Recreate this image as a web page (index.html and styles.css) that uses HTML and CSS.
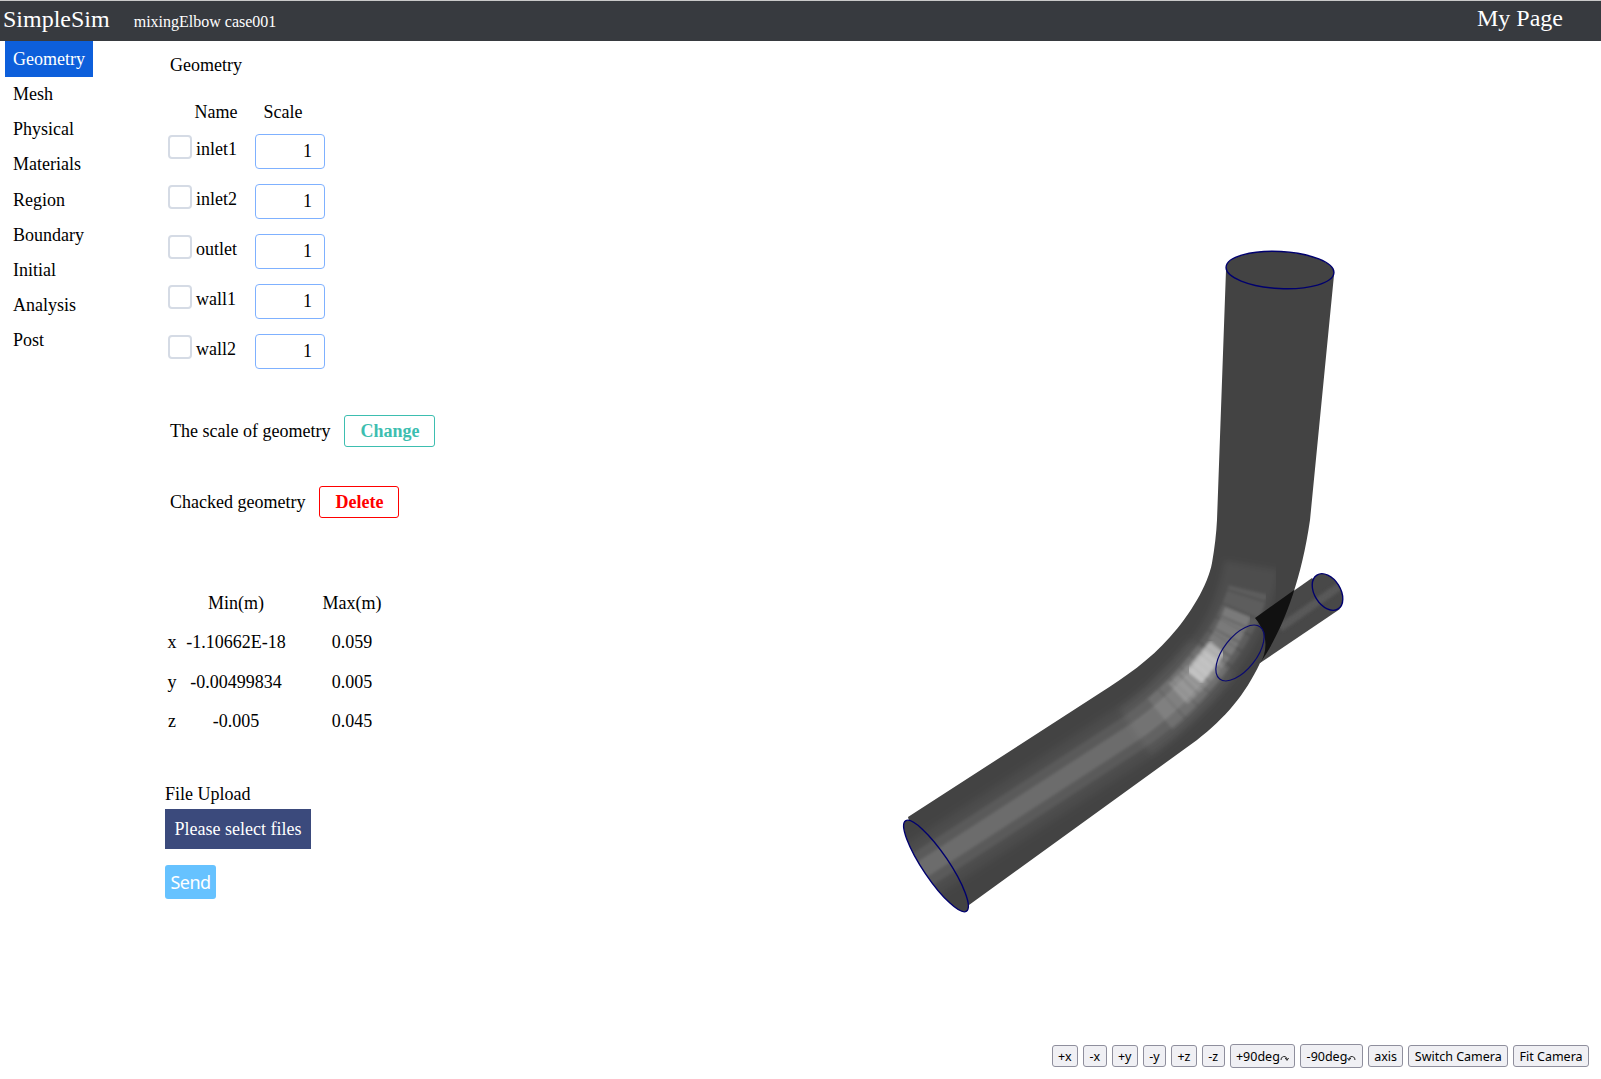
FILE: index.html
```html
<!DOCTYPE html>
<html lang="en">
<head>
<meta charset="utf-8">
<title>SimpleSim</title>
<link rel="stylesheet" href="styles.css">
</head>
<body>
<header class="topbar">
  <span class="brand">SimpleSim</span>
  <span class="case-name">mixingElbow case001</span>
  <span class="my-page">My Page</span>
</header>
<div class="workspace">
  <nav class="sidebar">
    <a class="nav-item active">Geometry</a>
    <a class="nav-item">Mesh</a>
    <a class="nav-item">Physical</a>
    <a class="nav-item">Materials</a>
    <a class="nav-item">Region</a>
    <a class="nav-item">Boundary</a>
    <a class="nav-item">Initial</a>
    <a class="nav-item">Analysis</a>
    <a class="nav-item">Post</a>
  </nav>
  <main class="panel">
    <div class="panel-title">Geometry</div>
    <div class="geo-head"><span class="head-name">Name</span><span class="head-scale">Scale</span></div>
    <div class="geo-list">
      <div class="geo-row"><input class="check" type="checkbox"><span class="geo-name">inlet1</span><input class="scale" type="text" value="1"></div>
      <div class="geo-row"><input class="check" type="checkbox"><span class="geo-name">inlet2</span><input class="scale" type="text" value="1"></div>
      <div class="geo-row"><input class="check" type="checkbox"><span class="geo-name">outlet</span><input class="scale" type="text" value="1"></div>
      <div class="geo-row"><input class="check" type="checkbox"><span class="geo-name">wall1</span><input class="scale" type="text" value="1"></div>
      <div class="geo-row"><input class="check" type="checkbox"><span class="geo-name">wall2</span><input class="scale" type="text" value="1"></div>
    </div>
    <div class="action-row change-row"><span>The scale of geometry</span><button class="btn btn-change">Change</button></div>
    <div class="action-row delete-row"><span>Chacked geometry</span><button class="btn btn-delete">Delete</button></div>
    <div class="bounds">
      <span></span><span>Min(m)</span><span>Max(m)</span>
      <span>x</span><span>-1.10662E-18</span><span>0.059</span>
      <span>y</span><span>-0.00499834</span><span>0.005</span>
      <span>z</span><span>-0.005</span><span>0.045</span>
    </div>
    <div class="upload-label">File Upload</div>
    <button class="select-files">Please select files</button>
    <button class="send">Send</button>
  </main>
  <section class="viewer">
    <svg class="scene" viewBox="600 41 1001 998" preserveAspectRatio="xMinYMin meet" aria-label="mixing elbow geometry">
      <defs>
        <path id="main-shape" d="M1226 270 L1217 520 Q1216 540 1212 563 C1208 585 1190 615 1170 637 C1150 660 1125 677 1100 693 L908 817 C915 850 945 895 969 905 L1197 740 C1225 718 1245 695 1260 663 C1278 638 1300 590 1310 520 L1334 275 Z"/>
        <clipPath id="main-clip">
          <use href="#main-shape"/>
          <ellipse cx="936" cy="866" rx="54.5" ry="13" transform="rotate(56 936 866)"/>
        </clipPath>
        <clipPath id="small-clip">
          <path d="M1312 578 L1255 618 L1260 663 L1340 609 Z"/>
          <ellipse cx="1327.5" cy="592" rx="20" ry="13" transform="rotate(58 1327.5 592)"/>
        </clipPath>
        <filter id="blur-lg" x="-20%" y="-20%" width="140%" height="140%"><feGaussianBlur stdDeviation="4"/></filter>
        <filter id="blur-md" x="-20%" y="-20%" width="140%" height="140%"><feGaussianBlur stdDeviation="3"/></filter>
        <filter id="blur-sm" x="-20%" y="-20%" width="140%" height="140%"><feGaussianBlur stdDeviation="1.5"/></filter>
      </defs>

      <path class="small-pipe" d="M1312 578 L1255 618 L1260 663 L1340 609 Z"/>
      <ellipse class="small-cap" cx="1327.5" cy="592" rx="20" ry="13" transform="rotate(58 1327.5 592)"/>
      <g clip-path="url(#small-clip)">
        <path class="small-band" filter="url(#blur-sm)" d="M1280 628 L1340 586"/>
      </g>

      <use href="#main-shape" class="main-fill"/>
      <ellipse class="main-cap" cx="1280" cy="270" rx="54" ry="18.5" transform="rotate(3 1280 270)"/>
      <ellipse class="main-cap" cx="936" cy="866" rx="54.5" ry="13" transform="rotate(56 936 866)"/>
      <g clip-path="url(#main-clip)">
        <path class="band band-wide" filter="url(#blur-lg)" d="M900 884 L1133 733 C1170 708 1195 680 1213 657"/>
        <path class="band band-mid" filter="url(#blur-sm)" d="M900 884 L1133 733 C1170 708 1195 680 1213 657"/>
        <path class="band band-core" filter="url(#blur-sm)" d="M900 884 L1133 733 C1170 708 1195 680 1213 657"/>
        <path class="bend bend-outer" filter="url(#blur-md)" d="M1135 732 C1170 708 1195 680 1213 657 C1230 635 1245 605 1252 565"/>
        <path class="bend bend-inner" filter="url(#blur-sm)" d="M1160 714 C1180 698 1197 678 1213 657 C1230 635 1243 610 1248 590"/>
        <path class="bend bend-hot" filter="url(#blur-sm)" d="M1178 694 C1190 683 1203 670 1213 657 C1222 646 1230 632 1238 612"/>
        <path class="bend bend-peak" filter="url(#blur-sm)" d="M1194 677 L1218 647"/>
        <path class="wedge" d="M1297 588 L1255 618 C1268 634 1268 650 1260 664 L1320 610 Z"/>
      </g>

      <ellipse class="rim" cx="1280" cy="270" rx="54" ry="18.5" transform="rotate(3 1280 270)"/>
      <ellipse class="rim rim-thin" cx="1240" cy="653" rx="33" ry="16.5" transform="rotate(-52 1240 653)"/>
      <ellipse class="rim" cx="1327.5" cy="592" rx="20" ry="13" transform="rotate(58 1327.5 592)"/>
      <ellipse class="rim" cx="936" cy="866" rx="54.5" ry="13" transform="rotate(56 936 866)"/>
    </svg>
    <div class="toolbar">
      <button class="tool">+x</button>
      <button class="tool">-x</button>
      <button class="tool">+y</button>
      <button class="tool">-y</button>
      <button class="tool">+z</button>
      <button class="tool">-z</button>
      <button class="tool tool-tall">+90deg<svg class="turn" viewBox="0 0 9 9"><path d="M1 7 C1 2.5 6.5 2.5 7 6"/><path d="M5.2 5 L7 7.4 L8.6 5"/></svg></button>
      <button class="tool tool-tall">-90deg<svg class="turn" viewBox="0 0 9 9"><path d="M8 7 C8 2.5 2.5 2.5 2 6"/><path d="M0.4 5 L2 7.4 L3.8 5"/></svg></button>
      <button class="tool">axis</button>
      <button class="tool">Switch Camera</button>
      <button class="tool">Fit Camera</button>
    </div>
  </section>
</div>
</body>
</html>
```
FILE: styles.css
```css
* { box-sizing: border-box; }
html, body { margin: 0; height: 100%; }
body {
  width: 1601px;
  height: 1079px;
  overflow: hidden;
  background: #fff;
  color: #000;
  font-family: "Liberation Serif", "Times New Roman", serif;
  font-size: 18px;
}
.topbar {
  height: 41px;
  border-top: 1px solid #c9c9c9;
  background: #373a3f;
  color: #fff;
  display: flex;
  align-items: center;
  padding: 0 38px 0 3px;
}
.brand { font-size: 24px; margin-bottom: 4px; }
.case-name { font-size: 16px; margin-left: 24px; margin-top: 2px; }
.my-page { font-size: 24px; margin-left: auto; margin-bottom: 6px; }

.workspace { display: flex; height: 1038px; }
.sidebar { width: 165px; padding-left: 5px; flex: none; display: flex; flex-direction: column; }
.nav-item {
  width: 88px;
  height: 35.15px;
  padding-left: 8px;
  line-height: 36.5px;
}
.nav-item.active { background: #0d5fdb; color: #fff; height: 36px; margin-bottom: -0.85px; }

.panel { width: 435px; flex: none; display: flex; flex-direction: column; align-items: flex-start; }
.panel-title { margin: 14px 0 0 5px; line-height: 20px; }
.geo-head { margin-top: 27px; height: 20px; line-height: 20px; width: 200px; display: flex; }
.head-name { width: 60px; margin-left: 21px; text-align: center; }
.head-scale { width: 60px; margin-left: 7px; text-align: center; }
.geo-list { margin-top: 12px; display: flex; flex-direction: column; gap: 15px; }
.geo-row { display: flex; height: 35px; align-items: flex-start; padding-left: 3px; }
.check {
  appearance: none;
  width: 24px;
  height: 24px;
  margin: 1px 0 0;
  border: 2px solid #d5dbe5;
  border-radius: 4px;
  background: #fff;
}
.geo-name { width: 59px; margin-left: 4px; line-height: 20px; padding-top: 5px; }
.scale {
  width: 70px;
  height: 35px;
  border: 1px solid #7fb1ff;
  border-radius: 4px;
  padding: 0 12px 0 0;
  text-align: right;
  font: 18px "Liberation Serif", "Times New Roman", serif;
  color: #000;
  background: #fff;
}

.action-row { display: flex; align-items: center; padding-left: 5px; height: 32px; }
.action-row span { padding-top: 1px; }
.change-row { margin-top: 46px; }
.delete-row { margin-top: 39px; }
.btn {
  height: 32px;
  background: #fff;
  border-radius: 3px;
  border: 1px solid;
  font: bold 18px "Liberation Serif", "Times New Roman", serif;
  padding: 1px 0 0;
  margin-left: 14px;
}
.btn-change { width: 91px; color: #3dbeb0; border-color: #3dbeb0; }
.btn-delete { width: 80px; color: #ff0000; border-color: #ff0000; }

.bounds {
  margin-top: 66px;
  display: grid;
  grid-template-columns: 14px 114px 118px;
  grid-auto-rows: 39.3px;
  align-items: center;
  text-align: center;
}
.upload-label { margin-top: 43px; line-height: 20px; }
.select-files {
  margin-top: 5px;
  width: 146px;
  height: 40px;
  border: 0;
  background: #3b4a7c;
  color: #fff;
  padding: 0;
  font: 18px "Liberation Serif", "Times New Roman", serif;
}
.send {
  margin-top: 16px;
  width: 51px;
  height: 34px;
  border: 0;
  border-radius: 3px;
  background: #66c2ff;
  color: #fff;
  padding: 0;
  font: 18px "Noto Sans", "DejaVu Sans", sans-serif;
  letter-spacing: -0.5px;
}

.viewer { flex: 1; min-width: 0; display: flex; flex-direction: column; }
.scene { width: 1001px; height: 998px; display: block; flex: none; }
.toolbar { display: flex; justify-content: flex-end; align-items: center; gap: 5px; height: 30px; padding: 0 12px 4px 0; margin-top: 4px; }
.tool {
  height: 22px;
  padding: 0 5.4px;
  border: 1px solid #8f8f9d;
  border-radius: 3px;
  background: #f0f0f4;
  color: #000;
  font: 12.5px "Noto Sans", "DejaVu Sans", sans-serif;
  display: flex;
  align-items: center;
}
.tool-tall { height: 24px; }
.turn { width: 9px; height: 9px; margin-top: 3px; fill: none; stroke: #222; stroke-width: 1; }

.small-pipe, .small-cap { fill: #484848; }
.small-band { fill: none; stroke: #585858; stroke-width: 8; }
.main-fill, .main-cap { fill: #434343; }
.band, .bend { fill: none; stroke: #fff; }
.band-wide { stroke-width: 60; stroke-opacity: 0.05; }
.band-mid { stroke-width: 38; stroke-opacity: 0.07; }
.band-core { stroke-width: 18; stroke-opacity: 0.11; }
.bend-outer { stroke-width: 56; stroke-opacity: 0.05; }
.bend-inner { stroke-width: 40; stroke-opacity: 0.09; stroke-dasharray: 15 1.5; }
.bend-hot { stroke-width: 28; stroke-opacity: 0.18; stroke-dasharray: 14 1.5; }
.bend-peak { stroke-width: 20; stroke-opacity: 0.42; }
.wedge { fill: #111; }
.rim { fill: none; stroke: #00006e; stroke-width: 1.4; }
.rim-thin { stroke-width: 1.2; stroke: #0a0a70; }
```
